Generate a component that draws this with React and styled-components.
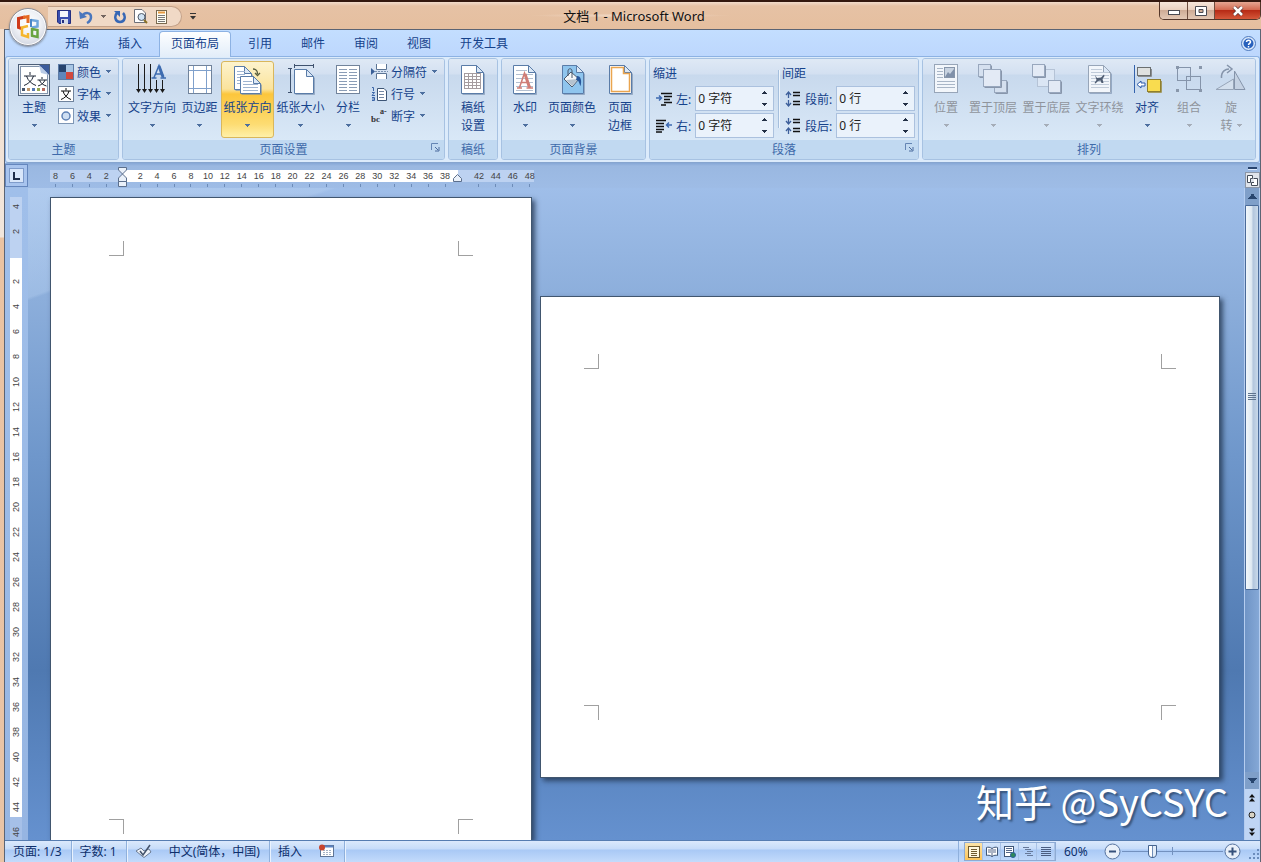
import React from "react";
import styled, { createGlobalStyle, css } from "styled-components";

const Global = createGlobalStyle`
  * { box-sizing: border-box; }
  html, body { margin: 0; padding: 0; height: 100%; overflow: hidden; }
  body, button, input {
    font-family: "Noto Sans", "Noto Sans CJK SC", sans-serif;
    font-size: 12px;
    color: #15428b;
  }
  button { background: none; border: 0; padding: 0; cursor: default; }
  svg { display: block; flex: none; }
`;

/* ---------- window ---------- */

const Window = styled.div`
  height: 100vh;
  display: flex;
  flex-direction: column;
  overflow: hidden;
  border-top: 2px solid #33180f;
  background: linear-gradient(#f3ddcb 0, #f1e6dc 235px, #eac3a2 236px, #e9c4a6 100%);
`;

const TitleBar = styled.header`
  position: relative;
  display: flex;
  align-items: center;
  height: 27px;
  flex: none;
  padding-left: 48px;
  background:
    radial-gradient(ellipse at 50% 50%, #f3dfcfcc 0, #f3dfcf00 100px),
    linear-gradient(#f1dccb 0, #e6c2a5 4px, #e5bf9f 100%);
`;

const Title = styled.h1`
  position: absolute;
  left: 0;
  right: 0;
  top: 4px;
  margin: 0;
  padding-left: 7px;
  font-size: 13px;
  line-height: 20px;
  font-weight: 400;
  text-align: center;
  color: #111;
  pointer-events: none;
`;

const OfficeButton = styled.button`
  position: absolute;
  left: 9px;
  top: 6px;
  width: 38px;
  height: 38px;
  border-radius: 50%;
  border: 1px solid #8d8f98;
  background: radial-gradient(circle at 50% 40%, #fff 0, #eef0f5 45%, #bfc6d4 100%);
  box-shadow: inset 0 0 0 1px #fff, 0 1px 2px #4448;
  display: grid;
  place-items: center;
  z-index: 3;
`;

const QuickBar = styled.div`
  display: flex;
  align-items: center;
  gap: 8px;
  height: 21px;
  margin-top: 2px;
  width: 134px;
  padding-left: 9px;
  border: 1px solid #c3a189;
  border-left: 0;
  border-radius: 0 11px 11px 0;
  background: #f0d9c6;
`;

const QuickMore = styled.button`
  margin-left: 8px;
  margin-top: 2px;
`;

const WindowButtons = styled.div`
  display: flex;
  margin-left: auto;
  align-self: flex-start;
  height: 18px;
  border: 1px solid #53362a;
  border-top: 0;
  border-radius: 0 0 5px 5px;
  overflow: hidden;
`;

const WindowButton = styled.button`
  width: ${(p) => (p.$close ? 46 : 27)}px;
  display: grid;
  place-items: center;
  border-left: ${(p) => (p.$first ? "0" : "1px solid #6d4c3d")};
  background: ${(p) =>
    p.$close
      ? "linear-gradient(#e4a692 0, #d26a51 45%, #b72b16 50%, #d5583a 100%)"
      : "linear-gradient(#f6e6da 0, #e9d0bf 45%, #cfac96 50%, #e3c8b5 100%)"};
`;

const Frame = styled.div`
  flex: 1;
  min-height: 0;
  display: flex;
  flex-direction: column;
  margin-left: 4px;
  border: 1px solid #5b6474;
  border-bottom: 0;
  background: #bfdbff;
`;

/* ---------- ribbon ---------- */

const TabRow = styled.nav`
  display: flex;
  align-items: flex-end;
  gap: 1px;
  height: 26px;
  flex: none;
  padding-left: 46px;
  background: linear-gradient(#c3deff, #bdd7fd);
`;

const Tab = styled.button`
  height: 26px;
  padding: 0 14px;
  ${(p) =>
    p.$active &&
    css`
      padding: 0 11px 3px;
      margin: 0 2px -1px;
      height: 26px;
      border: 1px solid #8db2e3;
      border-bottom: 0;
      border-radius: 4px 4px 0 0;
      background: linear-gradient(#fdfeff, #e2edf9);
      position: relative;
      z-index: 1;
    `}
`;

const HelpButton = styled.button`
  margin: 0 4px 5px auto;
`;

const Ribbon = styled.section`
  display: flex;
  gap: 3px;
  flex: none;
  padding: 1px 3px 2px 2px;
  border: 1px solid #8db2e3;
  border-bottom-color: #86a5cf;
  border-radius: 3px;
  background: #dcebfb;
`;

const GroupBox = styled.section`
  ${(p) => (p.$w ? `width: ${p.$w}px; flex: none;` : "flex: 1; min-width: 0;")}
  display: flex;
  flex-direction: column;
  border: 1px solid #a7c2e2;
  border-radius: 3px;
  overflow: hidden;
`;

const GroupBody = styled.div`
  display: flex;
  height: 81px;
  padding: 2px ${(p) => p.$pad || 3}px;
  background: linear-gradient(#dfe9f5 0, #d3e0f1 15px, #c8d9ed 16px, #d9e8f7 100%);
`;

const GroupFoot = styled.footer`
  position: relative;
  height: 19px;
  line-height: 19px;
  text-align: center;
  color: #3e6aaa;
  background: #c1d9f1;
`;

const Launcher = styled.button`
  position: absolute;
  right: 4px;
  top: 3px;
`;

const BigBox = styled.button`
  width: ${(p) => p.$w}px;
  flex: none;
  display: flex;
  flex-direction: column;
  align-items: center;
  height: 77px;
  padding-top: 2px;
  line-height: 18px;
  white-space: nowrap;
  border-radius: 3px;
  color: ${(p) => (p.disabled ? "#8f949c" : "#15428b")};
  ${(p) =>
    p.$active &&
    css`
      border: 1px solid #d9b75c;
      padding-top: 1px;
      background: linear-gradient(#fdf3cd 0, #fbe39c 27px, #fcc63c 32px, #fddc72 62px, #fff0a8 100%);
    `}
  svg:first-child { margin-bottom: 2px; }
`;

const SecondLine = styled.span`
  display: flex;
  align-items: center;
  gap: 4px;
  height: 18px;
`;

const Stack = styled.div`
  display: flex;
  flex-direction: column;
  margin-left: ${(p) => p.$ml || 0}px;
`;

const SmallBox = styled.button`
  display: flex;
  align-items: center;
  gap: 3px;
  height: 22px;
  padding-bottom: 1px;
  white-space: nowrap;
  svg:last-child { margin-left: 2px; }
`;

const Field = styled.fieldset`
  margin: 0;
  border: 0;
  padding: 0;
  min-width: 0;
  width: ${(p) => p.$w}px;
`;

const Legend = styled.legend`
  padding: 0;
  height: 25px;
  line-height: 25px;
`;

const SpinRow = styled.div`
  display: flex;
  align-items: center;
  gap: 4px;
  height: 25px;
  margin-bottom: 2px;
  padding-left: 3px;
  label { flex: 1; white-space: nowrap; }
`;

const Spinner = styled.div`
  display: flex;
  width: 79px;
  height: 25px;
  border: 1px solid #abc1de;
  background: #eaf2fb;
`;

const SpinInput = styled.input`
  flex: 1;
  min-width: 0;
  border: 0;
  padding: 0 2px 1px;
  background: transparent;
  color: #222;
`;

const SpinArrows = styled.div`
  display: flex;
  flex-direction: column;
  width: 17px;
  button { flex: 1; display: grid; place-items: center; }
`;

const Divider = styled.div`
  width: 1px;
  height: 58px;
  margin: 9px 3px 0 4px;
  background: #a5bfdd;
  box-shadow: 1px 0 #eef5fd;
`;

/* ---------- rulers and document ---------- */

const RulerRow = styled.div`
  display: flex;
  flex: none;
  height: 25px;
  background: linear-gradient(#86a7d6 0, #9ab8e1 3px, #9ebce6 100%);
`;

const TabStop = styled.button`
  width: 23px;
  height: 23px;
  margin-top: 1px;
  border: 1px solid #6486bd;
  background: #a8c4ee;
  display: grid;
  place-items: center;
`;

const HRuler = styled.div`
  position: relative;
  display: flex;
  width: 491px;
  height: 12px;
  margin: 7px 0 0 19px;
  font: 9px/12px "Liberation Sans", sans-serif;
  color: #444;
  background: linear-gradient(90deg,
    transparent 3px, #bdd2f1 3px, #bdd2f1 76px, #fff 76px, #fff 411px, #bdd2f1 411px, #bdd2f1 487px, transparent 487px);
  span {
    flex: 1;
    text-align: center;
    position: relative;
  }
  span::after {
    content: "";
    display: block;
    width: 1px;
    height: 3px;
    margin: 2px auto 0;
    background: #6d8cb8;
  }
  span:empty::after { display: none; }
`;

const Marker = styled.div`
  position: absolute;
  left: ${(p) => p.$x}px;
  top: ${(p) => p.$y}px;
`;

const RulerToggle = styled.div`
  width: 16px;
  margin-left: auto;
  display: flex;
  flex-direction: column;
  align-items: center;
  gap: 2px;
  padding-top: 4px;
`;

const SplitHandle = styled.div`
  width: 9px;
  height: 3px;
  background: #29456f;
  border-bottom: 1px solid #dce9fa;
`;

const ToggleButton = styled.button`
  width: 15px;
  height: 16px;
  border: 1px solid #8c96a6;
  background: #dfe3ea;
  display: grid;
  place-items: center;
`;

const Workspace = styled.main`
  flex: 1;
  min-height: 0;
  display: flex;
  background: linear-gradient(#9fbee9 0, #8caedb 17%, #6f97cb 41%, #4f79b1 74%, #6591cf 100%);
`;

const VGutter = styled.div`
  width: 23px;
  flex: none;
  overflow: hidden;
  padding: 9px 0 0 5px;
  background: linear-gradient(#a0bfea, #96b5e2);
`;

const VRuler = styled.div`
  width: 12px;
  height: 650px;
  margin-top: -3px;
  display: flex;
  flex-direction: column;
  font: 9px/12px "Liberation Sans", sans-serif;
  color: #444;
  background: linear-gradient(
    transparent 3px, #bdd2f1 3px, #bdd2f1 64px, #fff 64px, #fff 623px, #a6c0e8 623px);
  span {
    flex: 1;
    text-align: center;
    writing-mode: vertical-rl;
    transform: rotate(180deg);
  }
`;

const Canvas = styled.div`
  flex: 1;
  min-width: 0;
  display: flex;
  gap: 8px;
  padding: 9px 24px 0 22px;
  overflow: hidden;
  background: linear-gradient(160deg, #c6dcf677 0, #bcd5f355 103px, transparent 106px);
`;

const Sheet = styled.article`
  display: flex;
  flex-direction: column;
  justify-content: space-between;
  background: #fff;
  border: 1px solid #41566f;
  box-shadow: 3px 3px 5px #22354fcc;
  ${(p) =>
    p.$landscape
      ? css`
          flex: 1;
          height: 482px;
          margin-top: 99px;
          padding: 57px 43px;
        `
      : css`
          flex: none;
          width: 482px;
          padding: 43px 58px 6px;
          border-bottom: 0;
        `}
`;

const CropRow = styled.div`
  display: flex;
  justify-content: space-between;
`;

const Crop = styled.i`
  width: 15px;
  height: 15px;
  border: 0 solid #a0a0a0;
  ${(p) => p.$v}: 1px solid #a0a0a0;
  ${(p) => p.$h}: 1px solid #a0a0a0;
`;

const ScrollBar = styled.aside`
  width: 16px;
  flex: none;
  display: flex;
  flex-direction: column;
  border-left: 1px solid #b5cdf0;
  border-right: 1px solid #b5cdf0;
  background: linear-gradient(90deg, #6f94c6, #85a8d6);
`;

const ScrollButton = styled.button`
  height: 17px;
  flex: none;
  display: grid;
  place-items: center;
  background: ${(p) => (p.$light ? "#bfd5f4" : "#7f9fc9")};
`;

const ScrollThumb = styled.div`
  flex: 384;
  border: 1px solid #4a6b9a;
  border-radius: 1px;
  background: linear-gradient(90deg, #f1f7fb, #dfe9f2 45%, #b3c6dd 60%, #c9d9ea);
  display: grid;
  place-items: center;
`;

const ScrollTrack = styled.div`
  flex: 183;
`;

const Watermark = styled.div`
  position: absolute;
  right: 33px;
  bottom: 33px;
  font: 38px/56px "Noto Sans CJK SC", sans-serif;
  color: #fff;
  text-shadow: 2px 2px 2px #2d4668cc;
  pointer-events: none;
`;

/* ---------- status bar ---------- */

const Status = styled.footer`
  display: flex;
  flex: none;
  height: 22px;
  border-top: 1px solid #567db1;
  color: #0d2f6b;
  background: linear-gradient(#dbe9fc 0, #c6dcf9 8px, #a9c9f5 9px, #c3dbfb 100%);
`;

const StatusItem = styled.button`
  display: flex;
  align-items: center;
  padding: 0 9px 1px 8px;
  color: #0d2f6b;
  white-space: nowrap;
  ${(p) => p.$line && "border-right: 1px solid #8fb0dc; box-shadow: 1px 0 #e9f2fe;"}
`;

const Spacer = styled.div`
  flex: 1;
  border-right: 1px solid #8fb0dc;
`;

const Views = styled.div`
  display: flex;
  margin: 1px 8px 1px 5px;
  border: 1px solid #8eabd4;
`;

const ViewButton = styled.button`
  width: 18px;
  display: grid;
  place-items: center;
  background: ${(p) => (p.$active ? "linear-gradient(#fbe3a8, #fcc45a)" : "transparent")};
  border-right: 1px solid #a7c1e6;
`;

const ZoomText = styled.button`
  width: 40px;
  text-align: left;
  color: #0d2f6b;
`;

const RoundButton = styled.button`
  align-self: center;
`;

const Slider = styled.input`
  appearance: none;
  flex: none;
  width: 101px;
  height: 20px;
  margin: 0 1px;
  background: linear-gradient(#7391bf, #7391bf) center / 100% 1px no-repeat,
    linear-gradient(#7391bf, #7391bf) 50% 50% / 1px 8px no-repeat;
  &::-webkit-slider-thumb {
    appearance: none;
    width: 9px;
    height: 13px;
    border: 1px solid #46648f;
    border-radius: 1px 1px 5px 5px;
    background: linear-gradient(90deg, #fff 3px, #6f8db8 3px, #6f8db8 4px, #e2ecf8 4px);
  }
`;

const Grip = styled.div`
  display: flex;
  align-items: flex-end;
  padding: 0 0 2px 8px;
`;

/* ---------- drawings ---------- */

const Arrow = ({ up, color = "#4d6f9f", w = 5 }) => (
  <svg width={w} height={w > 6 ? 5 : 3} viewBox="0 0 5 3" preserveAspectRatio="none" shapeRendering="crispEdges">
    <path d={up ? "M0 3H5L3 0H2Z" : "M0 0H5L3 3H2Z"} fill={color} />
  </svg>
);

const Ico = ({ w = 36, h = 34, children }) => (
  <svg width={w} height={h} viewBox={`0 0 ${w} ${h}`} fill="none">
    {children}
  </svg>
);

const lines = (x1, x2, ys) => ys.map((y) => `M${x1} ${y}H${x2}`).join("");

const Page = ({ x = 6, y = 2, w = 23, h = 29, fill = "#fff", stroke = "#5a7ca8" }) => (
  <>
    <path d={`M${x + 1} ${y + h + 1}H${x + w + 1}V${y + 8}`} stroke="#7189a8" opacity=".6" />
    <path d={`M${x} ${y}H${x + w - 7}L${x + w} ${y + 7}V${y + h}H${x}Z`} fill={fill} stroke={stroke} />
    <path d={`M${x + w - 7} ${y}V${y + 7}H${x + w}Z`} fill="#dce8f6" stroke={stroke} />
  </>
);

const ThemeIcon = () => (
  <Ico>
    <rect x="2.500" y="1.500" width="31" height="31" fill="#e8edf3" stroke="#4d5f78" />
    <rect x="4.500" y="3.500" width="27" height="27" fill="#fff" stroke="#8193ab" />
    <path d="M23 2H33V12Z" fill="#3c5c9c" />
    <path d="M23 2L25 10L33 12Z" fill="#b9cbe6" />
    <path d="M14 9V12M8 13H20M10.500 13C12 18 16 21 20 22.500M17.500 13C16 18 12 21 8 22.500M26 14V16M21.500 17H31M23.500 17C24.500 20 27 22 30.500 23M29 17C28 20 25 22 22 23" stroke="#1d2636" />
    <path d="M6 26.500H9" stroke="#46566e" strokeWidth="3" />
    <path d="M11 26.500H14" stroke="#c1976a" strokeWidth="3" />
    <path d="M16 26.500H19" stroke="#5378b5" strokeWidth="3" />
    <path d="M21 26.500H24" stroke="#94a84e" strokeWidth="3" />
    <path d="M26 26.500H29" stroke="#b66a60" strokeWidth="3" />
  </Ico>
);

const TextDirIcon = () => (
  <Ico>
    <path d="M4.500 1V28M10.500 1V28M16.500 1V28M22.500 17V28M28.500 17V28" stroke="#1b1b1b" />
    <path d="M2 26H7L4.500 30ZM8 26H13L10.500 30ZM14 26H19L16.500 30ZM20 26H25L22.500 30ZM26 26H31L28.500 30Z" fill="#1b1b1b" />
    <path d="M17.500 15H22.500M26.500 15H32M20 14.500L25 2.500L29.500 14.500M22 11H27" stroke="#3e6cb0" strokeWidth="1.500" />
    <path d="M25 3L29 14" stroke="#3e6cb0" strokeWidth="3" />
  </Ico>
);

const MarginsIcon = () => (
  <Ico>
    <rect x="6.500" y="2.500" width="23" height="28" fill="#fff" stroke="#71839b" />
    <path d="M11.500 3V30M24.500 3V30M7 7.500H29M7 25.500H29" stroke="#7fa0cb" />
  </Ico>
);

const OrientationIcon = () => (
  <Ico>
    <Page x={4.5} y={3.5} w={17} h={23} />
    <path d={lines(7, 15, [8.5, 11.5, 14.5, 17.5, 20.5])} stroke="#9fb4d0" />
    <Page x={10.5} y={13.5} w={20} h={17} />
    <path d={lines(13, 22, [18.5]) + lines(13, 28, [21.5, 24.5, 27.5])} stroke="#9fb4d0" />
    <path d="M23 6C26 6 27.500 8 27.500 11M25 10L27.500 12.500L30 10" stroke="#5b6040" strokeWidth="1.300" />
  </Ico>
);

const SizeIcon = () => (
  <Ico>
    <Page x={11.5} y={6.5} w={19} h={24} />
    <path d="M11 2.500H31M11.500 1V5M30.500 1V5M7.500 5V30M5 5.500H9M5 29.500H9" stroke="#3f526e" />
  </Ico>
);

const columnRows = [6.5, 9.5, 12.5, 15.5, 18.5, 21.5, 24.5, 27.5];
const ColumnsIcon = () => (
  <Ico>
    <rect x="6.500" y="2.500" width="23" height="28" fill="#fff" stroke="#71839b" />
    <path d={lines(9, 17, columnRows) + lines(19, 27, columnRows)} stroke="#8b9db6" />
  </Ico>
);

const GridPaperIcon = () => (
  <Ico>
    <Page x={6.5} y={2.5} w={22} h={28} />
    <path d={lines(9, 26, [10.5, 13.5, 16.5, 19.5, 22.5, 25.5]) + "M9.500 10V26M13.500 10V26M17.500 10V26M21.500 10V26M25.500 10V26"} stroke="#a59c9f" />
  </Ico>
);

const WatermarkIcon = () => (
  <Ico>
    <Page x={6.5} y={2.5} w={22} h={28} />
    <path d={lines(9, 20, [7.5]) + lines(9, 26, [11.5, 15.5, 19.5, 23.5, 27.5])} stroke="#b3bfd0" />
    <path d="M10 25H15M19.500 25H26M12.500 24.500L17.500 10L23 24.500M14 19.500H21" stroke="#d07d76" strokeWidth="1.500" />
    <path d="M18 11L22.500 24.500" stroke="#d07d76" strokeWidth="3" />
  </Ico>
);

const PageColorIcon = () => (
  <Ico>
    <Page x={8.5} y={2.5} w={21} h={28} fill="#8fc5ee" />
    <path d="M10 16L17 9L25 16L18 24Z" fill="#f4f6f8" stroke="#4a596d" />
    <path d="M12 17L24 16L18 23Z" fill="#b5c3d0" />
    <path d="M14 13V8C14 5 18 5 18 8V15" stroke="#4a596d" />
    <path d="M23 13C27 13 28 18 26.500 23C25 20 25 17 22 17Z" fill="#27569b" />
  </Ico>
);

const BorderIcon = () => (
  <Ico>
    <Page x={7.5} y={2.5} w={22} h={28} />
    <path d="M9.500 4.500H21.500V10.500H27.500V28.500H9.500Z" stroke="#eaa54f" strokeWidth="1.500" />
  </Ico>
);

const GRAY = "#97a5b8";
const PositionIcon = () => (
  <Ico>
    <rect x="6.500" y="1.500" width="23" height="28" fill="#f2f6fb" stroke={GRAY} />
    <path d={lines(9, 15, [5.5, 8.5, 11.5, 14.5]) + lines(9, 27, [18.5, 21.5, 24.5])} stroke="#a9b6c7" />
    <rect x="16.500" y="4.500" width="10" height="10" fill="#c8d3e1" stroke="#8796ab" />
    <path d="M17 14L20 9L22 11L26 6V14Z" fill="#8091aa" />
  </Ico>
);

const Box = ({ x, y, s, fill = "#e3eaf5" }) => (
  <>
    <path d={`M${x + 1} ${y + s + 1}H${x + s + 1}V${y + 1}`} stroke="#8896ab" />
    <rect x={x} y={y} width={s} height={s} fill={fill} stroke="#98a7bd" />
  </>
);

const FrontIcon = () => (
  <Ico>
    <Box x={3.5} y={1.5} s={12} fill="#d5e0ef" />
    <Box x={19.5} y={17.5} s={12} fill="#d5e0ef" />
    <Box x={8.5} y={6.5} s={17} />
  </Ico>
);

const BackIcon = () => (
  <Ico>
    <rect x="8.500" y="6.500" width="17" height="17" fill="#dbe6f4" stroke="#b5c3d6" />
    <Box x={3.5} y={1.5} s={12} />
    <Box x={19.5} y={17.5} s={12} />
  </Ico>
);

const WrapIcon = () => (
  <Ico>
    <Page x={6.5} y={2.5} w={22} h={27} fill="#f2f6fb" stroke={GRAY} />
    <path d={lines(9, 20, [6.5]) + lines(9, 27, [9.5, 12.5, 15.5, 18.5, 21.5, 24.5])} stroke="#c0cbd9" />
    <path d="M13 12L15 15L19 14.500L22 11.500L22.500 13L20.500 16L21.500 20H19.500L18.500 17.500L16 18L13.500 20.500L12.500 20L14.500 17Z" fill="#4f5d72" />
  </Ico>
);

const AlignIcon = () => (
  <Ico>
    <path d="M5.500 2V30" stroke="#3463ad" />
    <rect x="8.500" y="4.500" width="13" height="8" fill="#dfe1e0" stroke="#6b6f70" />
    <path d="M9 13.500H22.500V6" stroke="#8a8d90" />
    <rect x="18.500" y="16.500" width="13" height="12" fill="#f9dc4f" stroke="#8f7f2d" />
    <path d="M19 29.500H32.500V18" stroke="#a29a63" />
    <path d="M8 21.500L12 18V20H16V23H12V25Z" fill="#fff" stroke="#2a59a8" />
  </Ico>
);

const GroupIcon = () => (
  <Ico>
    <rect x="6.500" y="4.500" width="13" height="13" stroke="#8594aa" />
    <rect x="15.500" y="13.500" width="14" height="13" stroke="#8594aa" />
    <path d="M5 3H8V6H5ZM28 3H31V6H28ZM5 26H8V29H5ZM28 26H31V29H28Z" fill="#8997ab" />
  </Ico>
);

const RotateIcon = () => (
  <Ico>
    <path d="M3 26.500H20.500V16Z" fill="#d3dfed" stroke={GRAY} />
    <path d="M21.500 8V26.500H32Z" fill="#c5d2e3" stroke="#8594aa" />
    <path d="M8.500 15C8 8 13 6 16 6" stroke="#8594aa" strokeWidth="1.500" />
    <path d="M14 2L19 6L14 10" stroke="#8594aa" strokeWidth="1.500" />
  </Ico>
);

const ColorsIcon = () => (
  <Ico w={16} h={16}>
    <rect width="8" height="8" fill="#26436e" /><rect x="8" width="8" height="8" fill="#a9c6e4" />
    <rect y="8" width="8" height="8" fill="#5e86bb" /><rect x="8" y="8" width="8" height="8" fill="#d2483e" />
    <rect x=".500" y=".500" width="15" height="15" stroke="#5d7ba5" />
  </Ico>
);
const FontsIcon = () => (
  <Ico w={16} h={16}>
    <rect x=".500" y=".500" width="15" height="15" fill="#fff" stroke="#6f839d" />
    <path d="M8 2V4.500M3 5H13M5 5C6 9 9 12 13 13.500M11 5C10 9 7 12 3 13.500" stroke="#111" />
  </Ico>
);
const EffectsIcon = () => (
  <Ico w={16} h={16}>
    <rect x=".500" y=".500" width="15" height="15" fill="#fff" stroke="#7f97b5" />
    <circle cx="8" cy="8" r="4" fill="#cfdff2" stroke="#5f82b6" strokeWidth="1.500" />
  </Ico>
);
const BreaksIcon = () => (
  <Ico w={17} h={16}>
    <path d="M0 4L4 7.500L0 11Z" fill="#3a5f97" />
    <path d="M5.500 0V5.500H15.500V0M5.500 15V9.500H15.500V15" fill="#fff" stroke="#5c7595" />
    <path d="M4 7.500H17" stroke="#7a91b0" strokeDasharray="2 1" />
  </Ico>
);
const LineNumIcon = () => (
  <Ico w={17} h={16}>
    <path d="M1 1.500H2.500V5M1 6.500H3.500L1 9.500H4M1 11.500H3.500V14.500H1M1 13H3" stroke="#3c66a8" />
    <path d="M6.500 2.500H13L15.500 5V14.500H6.500Z" fill="#fff" stroke="#3d5576" />
    <path d={lines(8, 13, [5.5, 8.5, 11.5])} stroke="#7488a5" />
  </Ico>
);
const HyphenIcon = () => (
  <Ico w={17} h={16}>
    <text x="0" y="14" fontSize="9" fontWeight="700" fill="#333" fontFamily="Liberation Serif, serif">bc</text>
    <text x="9" y="6" fontSize="8" fontWeight="700" fill="#333" fontFamily="Liberation Serif, serif">a-</text>
  </Ico>
);
const IndentIcon = ({ right }) => (
  <Ico w={16} h={14}>
    <path
      d={right
        ? "M0 1.500H10M0 4.500H8M0 7.500H8M0 10.500H8M0 13H6"
        : "M5 1.500H16M8 4.500H16M8 7.500H14M8 10.500H16M5 13H10"}
      stroke="#111" strokeWidth="1.500"
    />
    <path d={right ? "M16 6H11M13 3.500L10.500 6L13 8.500" : "M0 6H5M3 3.500L5.500 6L3 8.500"} stroke="#3d69b0" strokeWidth="1.500" />
  </Ico>
);
const SpacingIcon = ({ after }) => (
  <Ico w={16} h={16}>
    <path d={lines(8, 15, [1.5, 4.5, 10.5, 13.5])} stroke="#111" strokeWidth="1.500" />
    <path
      d={after ? "M3.500 0V6M3.500 16V10M1 3L3.500 6L6 3M1 13L3.500 10L6 13" : "M3.500 7V1M3.500 9V15M1 4L3.500 1L6 4M1 12L3.500 15L6 12"}
      stroke="#3d5f9b" strokeWidth="1.300"
    />
  </Ico>
);

const LauncherIcon = () => (
  <Ico w={9} h={9}>
    <path d="M.500 7V.500H7" stroke="#6485b4" />
    <path d="M4 4L7 7M8 4V8H4" stroke="#4a6b9d" />
  </Ico>
);

/* ---------- composed parts ---------- */

function Big({ icon: Icon, label, second, w, active, disabled, arrow = true }) {
  return (
    <BigBox $w={w} $active={active} disabled={disabled}>
      <Icon />
      <span>{label}</span>
      <SecondLine>
        {second}
        {arrow && <Arrow color={disabled ? "#a5adb8" : undefined} />}
      </SecondLine>
    </BigBox>
  );
}

function Small({ icon: Icon, label }) {
  return (
    <SmallBox>
      <Icon />
      {label}
      <Arrow />
    </SmallBox>
  );
}

function Group({ title, w, pad, launcher, children }) {
  return (
    <GroupBox $w={w}>
      <GroupBody $pad={pad}>{children}</GroupBody>
      <GroupFoot>
        {title}
        {launcher && <Launcher aria-label={title}><LauncherIcon /></Launcher>}
      </GroupFoot>
    </GroupBox>
  );
}

function Spin({ id, icon, label, value }) {
  return (
    <SpinRow>
      {icon}
      <label htmlFor={id}>{label}</label>
      <Spinner>
        <SpinInput id={id} defaultValue={value} />
        <SpinArrows>
          <button aria-label="+"><Arrow up color="#222f45" /></button>
          <button aria-label="-"><Arrow color="#222f45" /></button>
        </SpinArrows>
      </Spinner>
    </SpinRow>
  );
}

const tabs = ["开始", "插入", "页面布局", "引用", "邮件", "审阅", "视图", "开发工具"];

const hMarks = Array.from({ length: 29 }, (_, i) => {
  const n = (i - 4) * 2;
  return n === 0 || n === 40 ? "" : Math.abs(n);
});
const vMarks = Array.from({ length: 26 }, (_, i) => {
  const n = (i - 2) * 2;
  return n === 0 ? "" : Math.abs(n);
});

function Crops({ top }) {
  const h = top ? "border-bottom" : "border-top";
  return (
    <CropRow>
      <Crop $v="border-right" $h={h} />
      <Crop $v="border-left" $h={h} />
    </CropRow>
  );
}

export default function App() {
  return (
    <Window>
      <Global />
      <TitleBar>
        <OfficeButton aria-label="Office">
          <Ico w={28} h={28}>
            <path d="M11 4L4.500 5.500V14.500L9 16" stroke="#cf3a1a" strokeWidth="3" />
            <path d="M9 4.500L14 3.500V10" stroke="#e56a24" strokeWidth="3" />
            <path d="M17 7L23.500 8V13.500L18 14.500" stroke="#6ea5dc" strokeWidth="2.500" />
            <path d="M17 6V14" stroke="#4b87c9" strokeWidth="2" />
            <path d="M14 13L8 14.500V22L14 24V20" stroke="#f5b62c" strokeWidth="2.500" />
            <path d="M17 22.500L23.500 24V17L18 16V23" stroke="#69a441" strokeWidth="2.500" />
          </Ico>
        </OfficeButton>
        <QuickBar>
          <button aria-label="保存">
            <Ico w={14} h={14}>
              <path d="M.500 .500H13.500V13.500H2L.500 12Z" fill="#3a4fb0" stroke="#252f80" />
              <rect x="3" y="1" width="8" height="6" fill="#f3f6fc" />
              <rect x="4" y="9" width="7" height="5" fill="#d5dbe8" /><rect x="5" y="10" width="2" height="3" fill="#252f80" />
            </Ico>
          </button>
          <button aria-label="撤消">
            <Ico w={14} h={14}>
              <path d="M3 6C6 2 12 2 12 7C12 10 10 12 8 13" stroke="#4a76bd" strokeWidth="2.500" />
              <path d="M0 1L1 9L8 7Z" fill="#4a76bd" />
            </Ico>
          </button>
          <Arrow color="#73655f" />
          <button aria-label="恢复">
            <Ico w={12} h={14}>
              <path d="M3 3C0 6 1 12 6 12C11 12 12 6 9 3" stroke="#3767b5" strokeWidth="2.500" />
              <path d="M0 1H6V7Z" fill="#3767b5" />
            </Ico>
          </button>
          <button aria-label="打印预览">
            <Ico w={14} h={15}>
              <path d="M.500 .500H8L11.500 4V13.500H.500Z" fill="#fff" stroke="#6c6f78" />
              <circle cx="7.500" cy="8" r="3.500" fill="#cfe3f5" stroke="#505a68" />
              <path d="M10 11L13 14" stroke="#8b7125" strokeWidth="2" />
            </Ico>
          </button>
          <button aria-label="文档">
            <Ico w={12} h={14}>
              <rect x=".500" y=".500" width="10" height="13" fill="#fffef4" stroke="#7b6a4e" />
              <path d="M2 2.500H9" stroke="#e6993f" strokeWidth="2" />
              <path d={lines(2, 9, [5.5, 7.5, 9.5, 11.5])} stroke="#777" />
            </Ico>
          </button>
        </QuickBar>
        <QuickMore aria-label="自定义">
          <Ico w={6} h={7}>
            <path d="M0 .500H6" stroke="#333" />
            <path d="M0 3H6L3 6.500Z" fill="#333" />
          </Ico>
        </QuickMore>
        <Title>文档 1 - Microsoft Word</Title>
        <WindowButtons>
          <WindowButton $first aria-label="最小化">
            <Ico w={12} h={10}><rect x=".500" y="4.500" width="11" height="4" fill="#fff" stroke="#4b4b52" /></Ico>
          </WindowButton>
          <WindowButton aria-label="最大化">
            <Ico w={12} h={10}>
              <path d="M.500 .500H11.500V9.500H.500ZM4 3.500V6.500H8V3.500Z" fill="#fff" fillRule="evenodd" stroke="#4b4b52" />
            </Ico>
          </WindowButton>
          <WindowButton $close aria-label="关闭">
            <Ico w={12} h={10}>
              <path d="M2 1L10 9M10 1L2 9" stroke="#5f3030" strokeWidth="4" />
              <path d="M2 1L10 9M10 1L2 9" stroke="#fff" strokeWidth="2.500" />
            </Ico>
          </WindowButton>
        </WindowButtons>
      </TitleBar>

      <Frame>
        <TabRow>
          {tabs.map((t, i) => <Tab key={t} $active={i === 2}>{t}</Tab>)}
          <HelpButton aria-label="帮助">
            <Ico w={15} h={15}>
              <circle cx="7.500" cy="7.500" r="7" fill="#dbe9fb" stroke="#4c78bd" />
              <circle cx="7.500" cy="7.500" r="5" fill="#2861bd" />
              <path d="M5.500 6C5.500 3.500 9.500 3.500 9.500 6C9.500 7.300 7.500 7.300 7.500 9M7.500 10V11.500" stroke="#fff" strokeWidth="1.500" />
            </Ico>
          </HelpButton>
        </TabRow>

        <Ribbon>
          <Group title="主题" w={111} pad={1}>
            <Big icon={ThemeIcon} label="主题" w={48} />
            <Stack>
              <Small icon={ColorsIcon} label="颜色" />
              <Small icon={FontsIcon} label="字体" />
              <Small icon={EffectsIcon} label="效果" />
            </Stack>
          </Group>
          <Group title="页面设置" w={323} launcher>
            <Big icon={TextDirIcon} label="文字方向" w={52} />
            <Big icon={MarginsIcon} label="页边距" w={43} />
            <Big icon={OrientationIcon} label="纸张方向" w={53} active />
            <Big icon={SizeIcon} label="纸张大小" w={53} />
            <Big icon={ColumnsIcon} label="分栏" w={42} />
            <Stack $ml={2}>
              <Small icon={BreaksIcon} label="分隔符" />
              <Small icon={LineNumIcon} label="行号" />
              <Small icon={HyphenIcon} label="断字" />
            </Stack>
          </Group>
          <Group title="稿纸" w={50}>
            <Big icon={GridPaperIcon} label="稿纸" second="设置" w={42} arrow={false} />
          </Group>
          <Group title="页面背景" w={145}>
            <Big icon={WatermarkIcon} label="水印" w={40} />
            <Big icon={PageColorIcon} label="页面颜色" w={54} />
            <Big icon={BorderIcon} label="页面" second="边框" w={42} arrow={false} />
          </Group>
          <Group title="段落" w={270} launcher>
            <Field $w={121}>
              <Legend>缩进</Legend>
              <Spin id="left" icon={<IndentIcon />} label="左:" value="0 字符" />
              <Spin id="right" icon={<IndentIcon right />} label="右:" value="0 字符" />
            </Field>
            <Divider />
            <Field $w={132}>
              <Legend>间距</Legend>
              <Spin id="before" icon={<SpacingIcon />} label="段前:" value="0 行" />
              <Spin id="after" icon={<SpacingIcon after />} label="段后:" value="0 行" />
            </Field>
          </Group>
          <Group title="排列">
            <Big icon={PositionIcon} label="位置" w={40} disabled />
            <Big icon={FrontIcon} label="置于顶层" w={54} disabled />
            <Big icon={BackIcon} label="置于底层" w={53} disabled />
            <Big icon={WrapIcon} label="文字环绕" w={53} disabled />
            <Big icon={AlignIcon} label="对齐" w={42} />
            <Big icon={GroupIcon} label="组合" w={42} disabled />
            <Big icon={RotateIcon} label="旋" second="转" w={42} disabled />
          </Group>
        </Ribbon>

        <RulerRow>
          <TabStop aria-label="制表符">
            <Ico w={15} h={15}>
              <rect x=".500" y=".500" width="14" height="14" fill="#d8e6fa" stroke="#7f9ccb" />
              <path d="M5 4V11H11" stroke="#1d2c49" strokeWidth="2" />
            </Ico>
          </TabStop>
          <HRuler>
            {hMarks.map((n, i) => <span key={i}>{n}</span>)}
            <Marker $x={71} $y={-3}>
              <Ico w={10} h={21}>
                <path d="M.500 .500H8.500V3L4.500 7L.500 3ZM4.500 7L8.500 11V14.500H.500V11ZM.500 14.500H8.500V19.500H.500Z" fill="#eaf1fa" stroke="#5c6f8c" />
              </Ico>
            </Marker>
            <Marker $x={406} $y={4}>
              <Ico w={10} h={9}>
                <path d="M4.500 .500L8.500 4.500V7.500H.500V4.500Z" fill="#eaf1fa" stroke="#5c6f8c" />
              </Ico>
            </Marker>
          </HRuler>
          <RulerToggle>
            <SplitHandle />
            <ToggleButton aria-label="标尺">
              <Ico w={13} h={13}>
                <path d="M1.500 1.500H6.500V4.500H4.500V8.500H1.500Z" fill="#fff" stroke="#444c59" />
                <path d="M7.500 4.500H11.500V11.500H5.500V8.500H8" fill="#fff" stroke="#444c59" />
              </Ico>
            </ToggleButton>
          </RulerToggle>
        </RulerRow>

        <Workspace>
          <VGutter>
            <VRuler>{vMarks.map((n, i) => <span key={i}>{n}</span>)}</VRuler>
          </VGutter>
          <Canvas>
            <Sheet><Crops top /><Crops /></Sheet>
            <Sheet $landscape><Crops top /><Crops /></Sheet>
          </Canvas>
          <ScrollBar>
            <ScrollButton aria-label="上"><Arrow up w={9} color="#28456e" /></ScrollButton>
            <ScrollThumb>
              <Ico w={8} h={8}><path d={lines(0, 8, [0.5, 2.5, 4.5, 6.5])} stroke="#60758f" /></Ico>
            </ScrollThumb>
            <ScrollTrack />
            <ScrollButton aria-label="下"><Arrow w={9} color="#28456e" /></ScrollButton>
            <ScrollButton $light aria-label="前一页">
              <Ico w={6} h={8}><path d="M0 3.500L3 0L6 3.500ZM0 7.500L3 4L6 7.500Z" fill="#111" /></Ico>
            </ScrollButton>
            <ScrollButton $light aria-label="选择浏览对象">
              <Ico w={8} h={8}><circle cx="4" cy="4" r="3" fill="#d8d3c4" stroke="#222" /></Ico>
            </ScrollButton>
            <ScrollButton $light aria-label="下一页">
              <Ico w={6} h={8}><path d="M0 .500H6L3 4ZM0 4.500H6L3 8Z" fill="#111" /></Ico>
            </ScrollButton>
          </ScrollBar>
        </Workspace>

        <Status>
          <StatusItem $line>页面: 1/3</StatusItem>
          <StatusItem $line>字数: 1</StatusItem>
          <StatusItem aria-label="拼写检查">
            <Ico w={17} h={15}>
              <path d="M1 7L6 4L9 7L14 5L16 8L9 13.500L7 12Z" fill="#eef2f8" stroke="#6a7a92" />
              <path d="M5 7L8 11L15 1" stroke="#44536b" strokeWidth="1.500" />
            </Ico>
          </StatusItem>
          <StatusItem $line>中文(简体，中国)</StatusItem>
          <StatusItem>插入</StatusItem>
          <StatusItem $line aria-label="宏录制">
            <Ico w={16} h={14}>
              <rect x="1.500" y="1.500" width="13" height="11" fill="#fff" stroke="#5f7597" />
              <path d="M5 2.500H14" stroke="#5b83c1" strokeWidth="2" />
              <path d={lines(4, 13, [6.5, 8.5, 10.5])} stroke="#a4b2c6" strokeDasharray="2 1" />
              <circle cx="3" cy="3.500" r="3" fill="#c8452f" />
            </Ico>
          </StatusItem>
          <Spacer />
          <Views>
            <ViewButton $active aria-label="页面视图">
              <Ico w={12} h={12}><rect x=".500" y=".500" width="11" height="11" fill="#fff8df" stroke="#6f5a2e" /><path d={lines(3, 9, [3.5, 5.5, 7.5, 9.5])} stroke="#6f5a2e" /></Ico>
            </ViewButton>
            <ViewButton aria-label="阅读版式">
              <Ico w={12} h={12}><path d="M6 2.500C4 1 2 1 .500 1.500V9.500C2 9 4 9 6 10.500C8 9 10 9 11.500 9.500V1.500C10 1 8 1 6 2.500Z" fill="#fff" stroke="#3f5677" /><path d="M6 2V11M2 4H5M2 6H5M7 4H10M7 6H10" stroke="#56698a" /></Ico>
            </ViewButton>
            <ViewButton aria-label="Web 版式">
              <Ico w={12} h={12}><rect x=".500" y=".500" width="9" height="10" fill="#fff" stroke="#3f5677" /><path d={lines(2, 8, [2.5, 4.5, 6.5])} stroke="#56698a" /><circle cx="9" cy="9" r="2.500" fill="#2f8a57" stroke="#2b609e" /></Ico>
            </ViewButton>
            <ViewButton aria-label="大纲">
              <Ico w={12} h={12}><path d="M1 1.500H7M3 3.500H9M5 5.500H11M3 7.500H9M5 9.500H11" stroke="#66799a" /></Ico>
            </ViewButton>
            <ViewButton aria-label="普通视图">
              <Ico w={12} h={12}><path d={lines(1, 11, [1.5, 3.5, 5.5, 7.5, 9.5])} stroke="#4a5d80" /></Ico>
            </ViewButton>
          </Views>
          <ZoomText>60%</ZoomText>
          <RoundButton aria-label="缩小">
            <Ico w={17} h={17}><circle cx="8.500" cy="8.500" r="7.500" fill="#e9f0f9" stroke="#58749f" /><path d="M5 8.500H12" stroke="#36517b" strokeWidth="2" /></Ico>
          </RoundButton>
          <Slider type="range" min="0" max="100" defaultValue="28" aria-label="显示比例" />
          <RoundButton aria-label="放大">
            <Ico w={17} h={17}><circle cx="8.500" cy="8.500" r="7.500" fill="#e9f0f9" stroke="#58749f" /><path d="M4.500 8.500H12.500M8.500 4.500V12.500" stroke="#36517b" strokeWidth="2" /></Ico>
          </RoundButton>
          <Grip>
            <Ico w={11} h={11}><path d="M8 0H10V2H8ZM8 4H10V6H8ZM4 4H6V6H4ZM8 8H10V10H8ZM4 8H6V10H4ZM0 8H2V10H0Z" fill="#6b8cbc" /></Ico>
          </Grip>
        </Status>
      </Frame>
      <Watermark>知乎 @SyCSYC</Watermark>
    </Window>
  );
}
